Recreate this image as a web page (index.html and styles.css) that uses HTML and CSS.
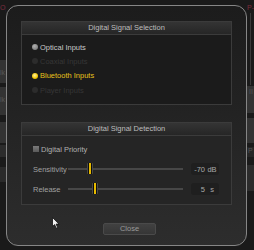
FILE: index.html
```html
<!DOCTYPE html>
<html lang="en">
<head>
    <meta charset="UTF-8">
    <title>Digital Signal</title>
    <link rel="stylesheet" href="styles.css">
</head>
<body>
    <div class="desk">
        <div class="side side-left">
            <span class="side-tag">Op</span>
            <div class="side-block b1"><span>lk</span></div>
            <div class="side-block b2"><span>lk</span></div>
            <div class="side-block b3"></div>
            <div class="side-block b4"></div>
            <div class="side-block b5"></div>
        </div>

        <div class="dialog">
            <div class="group group-selection">
                <div class="group-head">Digital Signal Selection</div>
                <ul class="inputs">
                    <li class="input-item is-on"><span class="radio"></span>Optical Inputs</li>
                    <li class="input-item is-off"><span class="radio"></span>Coaxial Inputs</li>
                    <li class="input-item is-active"><span class="radio"></span>Bluetooth Inputs</li>
                    <li class="input-item is-off"><span class="radio"></span>Player Inputs</li>
                </ul>
            </div>

            <div class="group group-detection">
                <div class="group-head">Digital Signal Detection</div>
                <div class="detect-body">
                    <div class="check-row"><span class="checkbox"></span>Digital Priority</div>
                    <div class="slider-row">
                        <span class="slider-label">Sensitivity</span>
                        <div class="track"><span class="thumb" style="left: 19px"></span></div>
                        <div class="value"><span class="num">-70</span><span class="unit">dB</span></div>
                    </div>
                    <div class="slider-row">
                        <span class="slider-label">Release</span>
                        <div class="track"><span class="thumb" style="left: 24px"></span></div>
                        <div class="value"><span class="num">5</span><span class="unit">s</span></div>
                    </div>
                </div>
            </div>

            <div class="dialog-foot">
                <button type="button" class="btn-close">Close</button>
            </div>
        </div>

        <div class="side side-right">
            <span class="side-tag">P-C</span>
            <div class="side-line"></div>
            <div class="side-block r1"><span>II</span></div>
            <div class="side-block r2"></div>
            <div class="side-block r3"><span>P</span></div>
            <div class="side-block r4"></div>
        </div>
    </div>

    <svg class="cursor" width="8" height="12" viewBox="0 0 8 12">
        <path d="M0.5 0.5 L0.5 9.5 L2.6 7.6 L4.2 11.2 L5.6 10.6 L4.1 7.1 L7 7.1 Z" fill="#f2f2f2" stroke="#111" stroke-width="0.8"/>
    </svg>
</body>
</html>
```

FILE: styles.css
```css
* {
    margin: 0;
    padding: 0;
    box-sizing: border-box;
}

body {
    width: 254px;
    height: 250px;
    overflow: hidden;
    position: relative;
    background: #1a1a1a;
    font-family: 'Liberation Sans', Arial, sans-serif;
    font-size: 7.5px;
    color: #b5b5b5;
}

.desk {
    display: flex;
    height: 250px;
}

/* background window bits */
.side {
    display: flex;
    flex-direction: column;
    overflow: hidden;
}

.side-left {
    width: 6px;
}

.side-right {
    width: 7px;
    position: relative;
}

.side-tag {
    display: block;
    height: 14px;
    padding-top: 4px;
    color: #7a2c3c;
    font-size: 7px;
    white-space: nowrap;
}

.side-block {
    background: #333;
    color: #555;
    font-size: 7px;
    padding-top: 9px;
}

.side-left .b1 { height: 23px; margin-top: 46px; }
.side-left .b2 { height: 28px; margin-top: 4px; }
.side-left .b3 { height: 21px; margin-top: 7px; }
.side-left .b4 { height: 12px; margin-top: 2px; background: #2c2c2c; }
.side-left .b5 { height: 15px; margin-top: 10px; background: #2a2a2a; }

.side-line {
    position: absolute;
    left: 3px;
    top: 13px;
    width: 1px;
    height: 72px;
    background: #3a3a3a;
}

.side-right .r1 { height: 27px; margin-top: 72px; padding-left: 2px; padding-top: 2px; }
.side-right .r2 { height: 25px; margin-top: 5px; }
.side-right .r3 { height: 10px; margin-top: 4px; background: #262626; padding: 0 0 0 1px; }
.side-right .r4 { height: 26px; margin-top: 8px; background: #2c2c2c; }

/* dialog */
.dialog {
    width: 241px;
    height: 241px;
    margin-top: 5px;
    border: 1px solid #868686;
    border-radius: 12px;
    background: linear-gradient(180deg, #1c1c1c 0%, #232323 45%, #2d2d2d 100%);
    padding: 15px 14px 0;
    display: flex;
    flex-direction: column;
}

.group {
    border: 1px solid #3b3b3b;
}

.group-selection {
    height: 84px;
    background: #1b1b1b;
}

.group-detection {
    height: 83px;
    margin-top: 17px;
    background: #252525;
}

.group-head {
    height: 13px;
    line-height: 12px;
    text-align: center;
    color: #bdbdbd;
    background: linear-gradient(180deg, #343434, #262626);
    border-bottom: 1px solid #3b3b3b;
}

.inputs {
    list-style: none;
    padding: 5px 0 0 10px;
}

.input-item {
    display: flex;
    align-items: center;
    height: 14.3px;
}

.radio {
    width: 6px;
    height: 6px;
    border-radius: 50%;
    margin-right: 2px;
}

.is-on { color: #c8c8c8; }
.is-on .radio { background: radial-gradient(circle at 40% 35%, #b0b0b0, #6c6c6c); }

.is-off { color: #363636; }
.is-off .radio { background: #2c2c2c; }

.is-active { color: #e6c11c; }
.is-active .radio { background: radial-gradient(circle at 45% 40%, #fff2a0, #f0c400 60%, #b08c00); }

.detect-body {
    padding: 3px 12px 0 11px;
}

.check-row {
    display: flex;
    align-items: center;
    height: 20px;
    color: #b0b0b0;
}

.checkbox {
    width: 6px;
    height: 6px;
    margin-right: 2px;
    background: linear-gradient(180deg, #7a7a7a, #5a5a5a);
}

.slider-row {
    display: flex;
    align-items: center;
    height: 20px;
    color: #a0a0a0;
}

.slider-label {
    width: 35px;
}

.track {
    flex: 1;
    height: 2px;
    background: #474747;
    position: relative;
}

.thumb {
    position: absolute;
    top: -5px;
    width: 6px;
    height: 11px;
    border-radius: 1px;
    background: linear-gradient(90deg, #4a4a4a 0 1px, #0e0e0e 1px 2px, #e6ba00 2px 4px, #0e0e0e 4px 5px, #4a4a4a 5px);
}

.value {
    width: 28px;
    height: 12px;
    margin-left: 8px;
    border-radius: 3px;
    background: #1f1f1f;
    display: flex;
    align-items: center;
    color: #a8a8a8;
}

.num {
    width: 14px;
    text-align: right;
}

.unit {
    flex: 1;
    text-align: center;
}

.dialog-foot {
    display: flex;
    justify-content: center;
    padding-left: 6px;
    margin-top: 18px;
}

.btn-close {
    width: 53px;
    height: 12px;
    border: 1px solid #4a4a4a;
    border-radius: 2px;
    background: linear-gradient(180deg, #414141, #363636);
    color: #9a9a9a;
    font-family: inherit;
    font-size: 7.5px;
    line-height: 10px;
}

.cursor {
    position: absolute;
    left: 52px;
    top: 217px;
}
```
